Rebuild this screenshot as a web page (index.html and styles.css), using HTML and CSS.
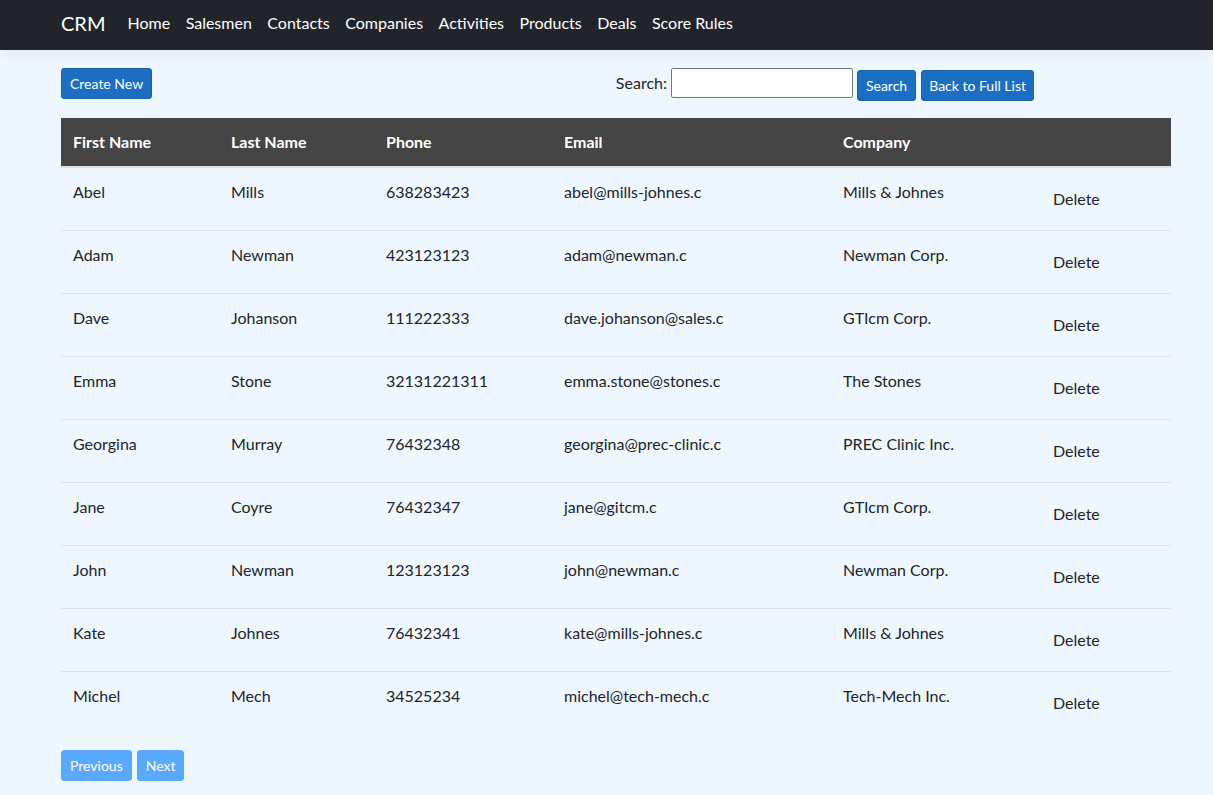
FILE: index.html
```html
<!DOCTYPE html>
<html lang="en">
<head>
<meta charset="utf-8">
<title>Contacts - CRM</title>
<link rel="stylesheet" href="styles.css">
</head>
<body>
<header class="navbar">
  <div class="container nav-inner">
    <a class="brand" href="#">CRM</a>
    <nav class="nav-links">
      <a href="#">Home</a>
      <a href="#">Salesmen</a>
      <a href="#">Contacts</a>
      <a href="#">Companies</a>
      <a href="#">Activities</a>
      <a href="#">Products</a>
      <a href="#">Deals</a>
      <a href="#">Score Rules</a>
    </nav>
  </div>
</header>
<main class="container main">
  <div class="toolbar">
    <a class="btn btn-primary btn-sm" href="#">Create New</a>
    <form class="search">
      <label class="search-label">Search:</label>
      <input class="search-input" type="text">
      <button class="btn btn-primary btn-sm btn-low" type="button">Search</button>
      <a class="btn btn-primary btn-sm btn-low btn-back" href="#">Back to Full List</a>
    </form>
  </div>
  <table class="table">
    <colgroup>
      <col class="c1"><col class="c2"><col class="c3"><col class="c4"><col class="c5"><col class="c6">
    </colgroup>
    <thead>
      <tr><th>First Name</th><th>Last Name</th><th>Phone</th><th>Email</th><th>Company</th><th></th></tr>
    </thead>
    <tbody>
      <tr><td>Abel</td><td>Mills</td><td>638283423</td><td>abel@mills-johnes.c</td><td>Mills &amp; Johnes</td><td><button class="btn btn-link-plain">Delete</button></td></tr>
      <tr><td>Adam</td><td>Newman</td><td>423123123</td><td>adam@newman.c</td><td>Newman Corp.</td><td><button class="btn btn-link-plain">Delete</button></td></tr>
      <tr><td>Dave</td><td>Johanson</td><td>111222333</td><td>dave.johanson@sales.c</td><td>GTIcm Corp.</td><td><button class="btn btn-link-plain">Delete</button></td></tr>
      <tr><td>Emma</td><td>Stone</td><td>32131221311</td><td>emma.stone@stones.c</td><td>The Stones</td><td><button class="btn btn-link-plain">Delete</button></td></tr>
      <tr><td>Georgina</td><td>Murray</td><td>76432348</td><td>georgina@prec-clinic.c</td><td>PREC Clinic Inc.</td><td><button class="btn btn-link-plain">Delete</button></td></tr>
      <tr><td>Jane</td><td>Coyre</td><td>76432347</td><td>jane@gitcm.c</td><td>GTIcm Corp.</td><td><button class="btn btn-link-plain">Delete</button></td></tr>
      <tr><td>John</td><td>Newman</td><td>123123123</td><td>john@newman.c</td><td>Newman Corp.</td><td><button class="btn btn-link-plain">Delete</button></td></tr>
      <tr><td>Kate</td><td>Johnes</td><td>76432341</td><td>kate@mills-johnes.c</td><td>Mills &amp; Johnes</td><td><button class="btn btn-link-plain">Delete</button></td></tr>
      <tr><td>Michel</td><td>Mech</td><td>34525234</td><td>michel@tech-mech.c</td><td>Tech-Mech Inc.</td><td><button class="btn btn-link-plain">Delete</button></td></tr>
    </tbody>
  </table>
  <div class="pager">
    <a class="btn btn-sm btn-disabled" href="#">Previous</a>
    <a class="btn btn-sm btn-disabled" href="#">Next</a>
  </div>
</main>
</body>
</html>
```
FILE: styles.css
```css
* { box-sizing: border-box; }
html, body {
  margin: 0;
  padding: 0;
}
body {
  background: #eff7fe;
  color: #212529;
  font-family: Lato, "Noto Sans", sans-serif;
  font-size: 16px;
  line-height: 24px;
  min-height: 795px;
}
a { text-decoration: none; color: inherit; }
.container {
  width: 1110px;
  margin-left: 61px;
}
.navbar {
  background: #212529;
  height: 50px;
  box-shadow: 0 4px 12px rgba(0, 0, 0, 0.06);
}
.nav-inner {
  display: flex;
  align-items: center;
  height: 50px;
  padding-bottom: 4px;
}
.brand {
  color: #fff;
  font-size: 20px;
  line-height: 30px;
  margin-right: 22px;
}
.nav-links {
  display: flex;
  gap: 15.5px;
}
.nav-links a {
  color: #fff;
  font-size: 16px;
  line-height: 24px;
}
.main {
  padding-top: 18px;
}
.toolbar {
  display: flex;
  align-items: flex-start;
  justify-content: space-between;
  width: 973px;
  height: 50px;
}
.search {
  display: flex;
  align-items: flex-start;
  margin: 0;
}
.search-label {
  font-size: 16px;
  line-height: 30px;
  margin-right: 4px;
}
.search-input {
  width: 182px;
  height: 30px;
  border: 1px solid #767676;
  border-radius: 2px;
  background: #fff;
  margin: 0 4px 0 0;
  padding: 1px 2px;
  font: inherit;
}
.btn {
  display: inline-block;
  font-family: inherit;
  font-size: 16px;
  line-height: 24px;
  padding: 6px 12px;
  border: 1px solid transparent;
  border-radius: 4px;
  background: transparent;
  color: #212529;
  cursor: pointer;
}
.btn-sm {
  font-size: 14px;
  line-height: 21px;
  padding: 4px 8px;
  border-radius: 3px;
}
.btn-primary {
  background: #1b6ec2;
  border-color: #1861ac;
  color: #fff;
}
.btn-low {
  margin-top: 2px;
}
.btn-back {
  margin-left: 5px;
  padding-left: 7px;
  padding-right: 7px;
}
.btn-disabled {
  background: #59a9ff;
  border-color: #59a9ff;
  color: #fff;
  cursor: default;
}
.table {
  width: 1110px;
  border-collapse: collapse;
  table-layout: fixed;
}
.c1 { width: 158px; }
.c2 { width: 155px; }
.c3 { width: 178px; }
.c4 { width: 279px; }
.c5 { width: 198px; }
.c6 { width: 142px; }
.table th {
  background: #454545;
  color: #fff;
  font-weight: 700;
  text-align: left;
  padding: 12px;
  border-bottom: 2px solid #dee2e6;
  vertical-align: bottom;
}
.table td {
  padding: 12px;
  vertical-align: top;
  border-top: 1px solid #dee2e6;
}
.table tbody tr:first-child td { border-top: 0; }
.table td .btn { margin: 0 0 0 -1px; }
.pager {
  display: flex;
  gap: 5px;
  margin-top: 16px;
}
```
